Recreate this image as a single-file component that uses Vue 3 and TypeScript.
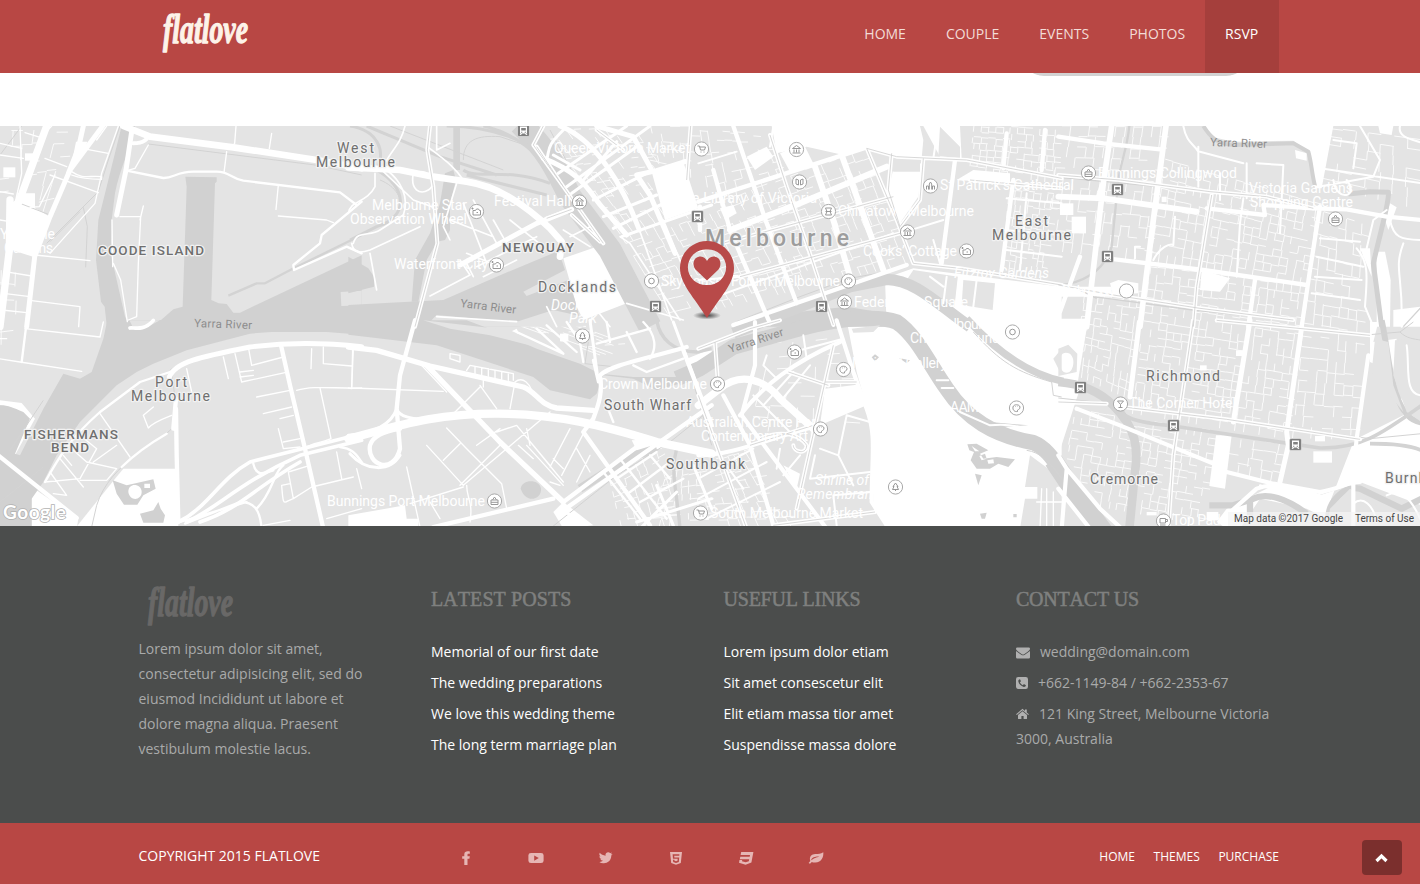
<script setup lang="ts">
type Point = [number, number]
interface Road { w: number; d: string }
interface Sector {
  x: number
  y: number
  parks: string[]
  water: string[]
  rivers: Road[]
  land: string[]
  rails: Road[]
  roads: Road[]
}
interface Label { t: string; x: number; y: number; w: number; k: string; r?: number }
interface Poi { x: number; y: number; g: string }

const nav = ['HOME', 'COUPLE', 'EVENTS', 'PHOTOS', 'RSVP']
const posts = ['Memorial of our first date', 'The wedding preparations', 'We love this wedding theme', 'The long term marriage plan']
const links = ['Lorem ipsum dolor etiam', 'Sit amet consescetur elit', 'Elit etiam massa tior amet', 'Suspendisse massa dolore']
const bottomLinks = ['HOME', 'THEMES', 'PURCHASE']

/* Each map sector covers 360x205 px and is drawn at three units per pixel. */
const sectors: Sector[] = [
  {
    x: 0, y: 120,
    parks: ['M35 250 70 220H105V265L150 290 104 412 20 385Z', 'M10 142H46V172H10Z', 'M75 100H100V122H75Z', 'M228 65H262L250 100 215 130Z'],
    water: [
      'M365 18H405C390 90 358 150 345 220L335 300 332 400 350 480 375 590 388 615H320L314 560 303 545 288 420 295 300 325 180Z',
      'M556 170 650 172V185L645 190 634 540 656 550 680 552 700 578H720L1085 406V620H460L520 568 548 560 560 200Z',
    ],
    land: ['M1022 516 1085 512V556L1024 558Z'],
    rivers: [],
    rails: [
      { w: 3, d: 'M360 18 325 120 295 215 140 370M250 262 262 320 257 442M150 365 240 275M445 72 945 135 1085 165M65 18 0 105M60 250 150 285' },
      { w: 7, d: 'M875 448 1085 345M685 527 770 490H795L875 448' },
    ],
    roads: [
      { w: 22, d: 'M140 18 55 250M30 240 28 390 0 620' },
      { w: 15, d: 'M308 18 210 150 150 290 104 410 80 620M250 18 235 85 205 160M395 35 378 150 350 285' },
      { w: 20, d: 'M370 18 450 50 700 82 950 120 1085 145' },
      { w: 7, d: 'M380 152 490 174C520 175 530 155 580 155H650C690 155 690 175 730 182L1020 217 1070 255M1085 245 965 345 960 370 880 435 882 450 1040 380 1085 400' },
      { w: 4, d: 'M680 95 672 158M708 18 704 70 690 85M380 152 405 145 445 75M815 40 808 85M835 195 828 268M835 288 980 300 1000 308M360 290 422 290 415 430 410 590 385 600M430 258 420 300M340 430 362 480 382 605M336 300 338 440M60 18 65 160 45 250M215 155C250 180 270 165 305 170V178C270 178 240 175 215 165M155 18 120 55M75 38 130 55M135 115 200 140M150 165 295 218M165 165 118 260 90 262M245 85 325 100M320 18 290 60M0 70 65 85M0 105 70 115M0 215 40 222M0 300 30 305M105 405 270 422M15 455 95 468M10 520 90 530M95 542 240 560 236 620M5 570 80 578M355 18 305 160 285 250 150 400' },
      { w: 12, d: 'M400 70C430 70 450 55 440 45' },
    ],
  },
  {
    x: 350, y: 120,
    parks: ['M905 155 1000 125 1045 265 945 300Z', 'M640 415 755 375 830 550 700 600 680 560 665 505Z'],
    water: [
      'M-5 555 120 548 280 540 440 470 620 395 632 412 645 450 520 515 530 528 655 480 675 540 690 600 500 620H-5Z',
      'M-5 410 55 445 72 470 72 500-5 520Z',
      'M285 160 310 150 318 180 300 250 300 330 285 360 262 365 230 420 205 545H185L195 420 240 340 270 250Z',
    ],
    land: ['M260 585 420 600 500 605 610 570 700 590 700 620H225Z'],
    rivers: [],
    rails: [
      { w: 20, d: 'M320 18V150' },
      { w: 70, d: 'M510 10C600 100 620 150 660 230L780 390 900 620' },
      { w: 9, d: 'M0 18C80 30 110 90 80 150M80 150C170 200 180 290 80 320L0 360M50 18C150 60 220 90 270 110L440 165M290 18C430 20 540 60 590 130M340 150C380 180 470 140 600 190M350 165 590 225M400 18C500 40 560 100 620 170' },
      { w: 3, d: 'M340 120C340 60 380 45 450 50L600 100M120 18 460 150M600 30 680 180M90 180C140 200 160 240 150 270' },
    ],
    roads: [
      { w: 20, d: 'M-5 142 150 150 250 170 350 185C450 200 530 260 600 325L635 365 630 410' },
      { w: 12, d: 'M240 18 232 90 250 200 262 370 195 620M590 295 665 268M665 285 750 365M580 18 550 75 640 200M820 90 740 30M1022 18 1010 180M560 80 640 200 760 370' },
      { w: 15, d: 'M1005 125 920 152 860 165 900 225 975 400M630 18C740 60 820 200 868 330M740 18 850 50 905 150M580 115C700 160 720 220 755 260L830 345M665 268 560 310 330 435' },
      { w: 9, d: 'M640 30C590 80 600 80 590 120M650 200 900 18M625 160 830 18M665 220 860 80M690 150 610 105M815 350 1085 255M700 180 800 65M730 240 900 155M760 290 920 225M790 325 940 250' },
      { w: 5, d: 'M232 80C300 130 320 150 340 180M190 160C180 210 210 225 235 210S245 160 215 155M165 18C150 80 120 90 95 150L190 240 250 262M75 160V200C50 250 0 240-5 280M10 370C20 330 60 350 90 330L160 285C180 230 150 180 110 150M5 370C10 400 30 400 60 390L210 320M320 190 280 320 300 360M340 250 410 430M370 240 440 370M300 300 430 350M430 300 470 370M380 440 560 350M350 400 450 440M240 528 360 465 330 420M500 420 400 470M480 300 580 380M640 330 720 380M370 470 350 430M660 350 720 320M260 18V90L300 70M810 350 840 370 990 600M870 335 965 600M940 300 1010 470M60 400 80 510' },
      { w: 5, d: 'M260 590 500 605M590 560 620 620M740 570 780 620M830 550 1000 600' },
    ],
  },
  {
    x: 700, y: 120,
    parks: [
      'M215 18H660L670 60 665 115 580 105 500 82 430 105 320 80 230 100Z', 'M582 138 668 130 655 230 600 310 565 210Z', 'M240 100 310 70 345 140 270 155Z', 'M140 110 200 80 220 110 165 150Z',
      'M555 475 640 445 1085 500V620H560Z', 'M60 265 100 255 110 280 75 300Z', 'M670 18 780 18 785 115 720 110Z', 'M820 150 930 160 930 190 770 180Z',
    ],
    water: ['M160 620 300 575 440 560 560 580 640 620Z'],
    land: ['M640 450 775 470 765 560 690 520 620 480Z', 'M790 480 885 490 878 570 785 555Z', 'M570 118 660 125V155H580Z', 'M720 20 780 80 780 115 715 108Z'],
    rivers: [],
    rails: [{ w: 34, d: 'M100 640 300 560 450 500 560 478C650 480 720 560 810 620' }, { w: 3, d: 'M110 605 300 530 450 475 560 455' }],
    roads: [
      { w: 18, d: 'M90 330 300 250 560 140M345 140 400 300 450 470M425 105 550 450' },
      { w: 13, d: 'M100 18 200 310 290 550M-5 245 500 82M100 615 620 435M0 260 0 330M40 150 90 330 210 610M940 180 905 450M765 120 725 430M920 40 910 145M780 470 770 560M1035 30 1025 150' },
      { w: 12, d: 'M210 45 260 200 330 400 400 615M120 470 600 340M-5 390 580 230M500 85 590 300 640 430 780 445 1085 495M500 85 590 110 800 120 1085 175M670 115 660 240 600 320M575 100 565 210 600 320M810 180 1085 205' },
      { w: 6, d: 'M-5 130 110 95M-5 480 120 470M20 540 580 340M220 18 210 80M590 18 575 110M715 18 700 115M600 340 730 300M700 360 720 430M920 235 1085 250M915 330 1085 345M920 390 1085 410M980 220 960 450M740 470 730 550M690 470 730 500M830 480 820 560' },
    ],
  },
  {
    x: 1060, y: 120,
    parks: [
      'M435 18H820L785 205H765L750 100 700 62 520 65 455 50Z', 'M425 450 510 475 480 515 420 510Z', 'M150 490 175 480 235 490V520L160 525Z', 'M0 500H155V530H0Z',
      'M950 395H975L992 480 990 620H950Z', 'M35 290H78V340H35Z', 'M0 250H40V285H0Z', 'M120 190H135V232H108Z', 'M705 90 740 100 740 122 708 115Z', 'M955 18H1000L995 45 960 40Z', 'M990 250 1010 262 985 330 975 300Z', 'M305 230H320V246H305Z', 'M900 385 930 385 935 470Z', 'M1000 570 1085 560V620H1000Z',
    ],
    water: [],
    land: [],
    rivers: [
      { w: 12, d: 'M430 18C450 50 470 72 520 75L700 70 745 95C755 130 755 160 765 198' },
      { w: 15, d: 'M865 222 930 215 985 217C990 240 960 340 940 430L965 620' },
    ],
    rails: [{ w: 7, d: 'M208 18C200 100 175 140 172 210L155 380C130 460 60 490-5 497' }, { w: 4, d: 'M-5 172 140 185 450 215 620 235M100 530 400 570 700 600M1085 560 1030 620M20 490 110 535' }],
    roads: [
      { w: 17, d: 'M155 18 130 190 80 620M318 18 280 300 240 620M-5 230 130 235 410 275' },
      { w: 13, d: 'M-5 50 130 70 300 88M140 415 430 450 740 495M780 260 750 450 725 620M585 480 565 620M440 265 615 285 610 255 760 265 860 268 980 290 1085 300M0 575 60 410' },
      { w: 12, d: 'M-5 165 180 180 450 215 620 230 760 265M455 225 410 500 400 620M-5 495 160 525 420 565 700 600' },
      { w: 6, d: 'M370 18C380 70 400 70 415 95M420 95 550 130M415 80V200M480 160V240M560 130V235M590 130 670 135 660 340M1020 18C1010 60 1080 60 1085 70M780 145 1085 190M775 200 940 170 960 120 900 18M820 60 890 70 880 145M780 355 900 365M770 410 910 440M765 470 905 480M755 520 900 540M890 385C930 430 920 480 915 560L940 620M240 380H225V415M280 420C300 380 330 370 340 375L345 290M550 235 540 310 530 470M860 180C900 230 830 250 820 180M990 300C1000 350 1020 360 1085 360M1030 370C1000 450 1030 460 1025 620M920 385 940 300 980 270' },
    ],
  },
  {
    x: 0, y: 322,
    parks: ['M370 440H535V620H225L345 470Z', 'M95 495 235 590 230 620H95Z', 'M0 235 65 243 105 290 45 400 30 390 75 300C50 250 20 255 0 250Z'],
    water: [
      'M322-6H1085V38L980 30H815L750 35 560 85 460 125 410 150 350 190 240 300 170 400 130 480 95 530V620H-5V250C20 248 35 255 70 270L90 290 45 395 60 400 130 260 190 155 240 170 275 150 310 50Z',
      'M338 475 380 490 460 472 467 500 430 520 412 548H372L350 515ZM385 510C385 480 425 485 425 510S390 540 385 510ZM433 485H450V498H433Z',
      'M420 575 460 565 475 540 482 560 495 580 490 602H430Z',
    ],
    land: ['M388-5H480C450 10 430 30 400 18Z'],
    rivers: [],
    rails: [{ w: 3, d: 'M510 145C540 120 600 100 750 70L960 60 1085 72M515 160C530 240 530 300 515 320C480 360 330 420 290 550L275 615M130 235 30 385M0 540 130 435' }],
    roads: [
      { w: 15, d: 'M508 165C525 120 600 105 750 75 850 62 960 60 1085 74' },
      { w: 13, d: 'M843 70 870 190 915 380 970 620M-5 400 230 588M528 260 530 400 535 600M520 320 528 230' },
      { w: 11, d: 'M390 18C400 15 430 30 460-5M535 600C620 560 660 470 750 420L1085 335M560 600C650 560 720 480 900 400L1085 355M600 600C720 560 760 500 900 420' },
      { w: 7, d: 'M80 0 65 120M510 150 420 180 300 270C210 350 180 400 135 480M365 435C400 400 440 370 500 335M720 540C760 540 780 560 785 620M540 600 740 540M1020 375C1060 380 1070 400 1085 420M760 425C770 470 800 450 820 445M770 560C820 510 820 450 850 430M555 605 720 540' },
      { w: 4, d: 'M-5 110 60 120 245 148M75 20 300 45 310 0M300 275 390 405M240 340 290 380 240 470 135 480M280 420 350 370M215 380 260 420 350 440M180 410 250 495M150 450 200 520 160 515M190 400 215 430M350 440 320 475H240M430 280 460 255M430 280 445 318C460 300 490 290 515 280M560 140 575 210M670 105 685 170M705 95 725 180 855 152M720 150 760 145M745 75 755 130 850 105M720 165 760 160M770 225 870 205M790 275 875 255M840 290 880 280M850 360 900 350M835 320 850 380 900 375M935 80 933 140M970 75V125L1055 132M1058 80 1055 195M890 205C940 190 1000 200 1085 198M960 198 993 350C960 365 940 360 915 378M865 450 930 430M865 450 880 530M845 490C850 560 850 540 880 530L935 495 1060 465M845 490 870 485M1010 390 1025 470M1070 440 1085 500M980 590 1085 560M790 610 870 595M0 50 20 50' },
    ],
  },
  {
    x: 350, y: 322,
    parks: ['M-5 580 165 550 170 590 205 590V620H-5Z', 'M630 35H655V58H630Z', 'M470 35 500 20 515 50 490 65Z', 'M1010 110 1085 80V125L1030 150Z', 'M640 540 730 610 640 620 610 570Z', 'M845 355 940 350 935 380 860 385Z'],
    water: [
      'M-5-5H250L350-5 470 40 560 80 690 125 750 155 850 165 980 165 1085 110V140L1040 170 920 205 850 170 760 160 740 215 720 232 600 205 550 165 260 70-5 38Z',
      'M512 500C515 470 570 470 573 500S530 550 512 500Z',
    ],
    land: ['M220-5 480 25 640 95 520 65 420 40 300 20Z'],
    rivers: [],
    rails: [{ w: 26, d: 'M690 500 840 405 920 380' }, { w: 10, d: 'M920-5C930 50 970 90 1040 90L1085 80M980 380C960 450 980 500 990 620' }, { w: 3, d: 'M600 620 800 460 960 360 1085 260M-5 72 70 85 160 108 240 130M800 135 1000 80 1085 370M715 60 705 125 800 135' }],
    roads: [
      { w: 16, d: 'M-5 75 80 85 240 132 520 195C560 210 570 250 620 258L730 265M230 130 450 360 640 540' },
      { w: 25, d: 'M-5 350C150 310 250 275 440 275C620 275 760 310 920 360L1085 395' },
      { w: 13, d: 'M195-5 150 160 140 260 150 380C130 460 50 430 60 370 70 340 100 330 150 320M750 160C760 220 740 260 730 290L700 330M750 160C780 130 870 115 1010 75M700 330 900 610M640 540 860 375M250 615 610 530M640 565 1085 250M1000 85 1085 310' },
      { w: 9, d: 'M-5 340C100 330 130 290 140 260 150 290 200 290 240 295M0 395C50 450 120 450 150 400M730 115 745 180M720-5 745 180M970 0 1085 310M980 510 870 620M920 490 970 610M700 620 640 560M1030 430 1085 560M860 600 1085 530' },
      { w: 4, d: 'M10 80 5 200-5 198M5 198 280 208M210 125 290 210M230 370 340 490 600 270M280 415 330 365M330 490 450 370M290 318 350 380 455 485 470 560M390 195 310 275M390 190 440 260M400 195V175M530 370 640 490M600 435 660 320M635 460 700 335M450 320 380 370M500 310 640 480M530 320 540 370M600 430 500 310 440 330M680 480 720 400M680 380 720 450M640 440 610 410M350 490C350 530 370 540 360 600M170 435 210 615M180 545 340 495M240 540 270 590M480 260 495 180C520 160 540 190 545 205M350 145 360 130 490 155V175M375 135V155M395 138V160M415 140V163M435 145V170M455 150V172M475 155V175M300 95 330 100V120L300 110ZM505 370 550 410M600 480 630 490' },
      { w: 7, d: 'M560 20 640 95M590 10 680 90M500 30 640 95M690 60 700 120M650 0 690 60M740 65 900 20M780 60 770 0M830 30 860 90M880 0C920 40 920 80 900 110M770 250 790 300M850 130 890 150 1000 110M800 470 920 390M840 510 960 420M870 540 1000 470M760 450 870 590M810 410 950 590M900 400 960 470' },
    ],
  },
  {
    x: 700, y: 322,
    parks: ['M440-5H1085V620H560L520 540 515 310 470 150Z', 'M375 200 470 188 500 250 360 310Z', 'M250 430 300 455 290 500Z'],
    water: [
      'M802 367 830 365 865 385 840 395 850 410 890 405 945 412 925 435 895 425 870 440H830L812 415 822 390 808 385ZM815 372 838 388 825 388ZM838 402 855 395 860 410 845 415ZM862 415 880 412 882 424 865 425Z',
      'M825 455 845 460 835 490Z', 'M515 106 525 97 537 106 525 118Z',
      'M840 575 860 572 855 590 845 590ZM940 576H950V586H940Z', 'M597 108 630 115 620 124ZM870 300 985 310 900 315Z',
    ],
    land: ['M455 20 540 10 520 30 460 32Z', 'M990 400 1085 470V620H960L975 530H1012V495H975Z', 'M1060 110 1085 80V160Z'],
    rivers: [{ w: 46, d: 'M-70 170 0 140 100 75 300 20C450-20 550-15 590 0 650 40 690 130 740 200 800 290 880 340 1000 362 1045 380 1070 430 1095 460' }],
    rails: [{ w: 22, d: 'M800-10C900 100 1000 160 1090 178' }, { w: 3, d: 'M820 30C900 120 950 150 1055 180L1060 220 1085 225M980 385C1020 390 1050 420 1085 470' }],
    roads: [
      { w: 22, d: 'M-5 250 60 200C120 150 190 170 240 230L340 320' },
      { w: 12.5, d: 'M410-5 460 150 500 260C530 340 515 400 515 540L560 610 760 620M165 0 165 130 125 280 380 620M70 220 150 370 220 610M-5 400C100 400 200 350 340 315M120 280C190 190 280 120 420 60' },
      { w: 12, d: 'M45 60 55 200M400 70 375 180 330 380 290 560M375 180 470 180M-5 220 60 400 140 620M150 370 340 310M180 350C250 320 300 340 320 370 320 400 280 390 280 370M-5 80 150 20 240-5M220 610 525 570M265 150 385 190' },
      { w: 6, d: 'M200 100 190 130 230 170M310 40 320 110M280 90 430 50M160 220 280 340M240 240 330 130M190 250 280 150M440 280 415 400 460 490M440 280 510 300M360 380 415 400M345 400 330 470 510 450M300 400 250 460M240 380 230 440M410 610 400 520 515 510M-5 470 160 380M-5 530 200 420M20 590 240 480M50 390 130 500M710 175 745 175M725 198 760 198M780 270 870 310C950 300 1020 330 1060 360' },
      { w: 4, d: 'M1040 500V620M1025 500 1020 620M1060 510V620M1010 540H1085' },
    ],
  },
  {
    x: 1060, y: 322,
    parks: [
      'M-5-10H85L50 200-5 160Z', 'M935 100 1030 280 890 350 880 450 1085 540V280L1000 210Z', 'M880 360 1085 340V550L900 480 780 520 640 490 500 560 470 600 500 620H540L600 530 740 560 800 590 810 540Z',
      'M468 340H515L495 500 448 492Z', 'M760 388H816V422H760Z', 'M528 85H550V102H528Z', 'M420 130H440V145H420Z', 'M765 342H795V358H765Z', 'M-5 190 60 200 40 260-5 400Z', 'M930 0H955L940 60 1010 50 1000 150 930 120Z', 'M440 570H475V595H440Z', 'M260 570H290V580H260Z',
    ],
    water: [],
    land: ['M-5 80 25 68 52 95 50 150-5 162ZM18 92C-10 92-5 152 20 152S50 92 18 92Z', 'M945 50 985 60 1000 190 1030 270 935 150ZM1005 55 1085 50V300L1040 270 1000 160Z', 'M810 560 870 500 900 520 1000 580 1085 560V620H800Z'],
    rivers: [
      { w: 56, d: 'M-20 415 50 520 140 640' },
      { w: 18, d: 'M965-5C980 60 990 180 1010 220 1030 280 1060 300 1090 302' },
      { w: 19, d: 'M448 550H520L580 530C620 510 680 530 740 575M805 590C805 540 850 490 900 500L1025 560 1085 530M570 540V580' },
    ],
    rails: [{ w: 26, d: 'M-5 180C60 185 120 210 160 250 230 320 235 380 225 450L208 620' }, { w: 11, d: 'M150 240C190 290 220 300 340 312L690 365 780 378C900 380 960 340 1085 250M930 365C1000 365 1050 370 1085 385' }, { w: 3, d: 'M-5 228 150 245 520 295 930 350 1085 335M540 0 930 38 1020 30 1060 0M1020 30C1040 50 1060 50 1085 55' }],
    roads: [
      { w: 15, d: 'M238 0 210 225M570-5 520 300M725 15 680 330 685 370 660 480' },
      { w: 12.5, d: 'M50 260 180 310 460 425M500 450 640 485 780 510C840 500 860 480 900 480M-5 400 20 440 5 620M20 440 120 560 185 620M-5 500 90 620M500 580 590 500C640 480 700 495 780 525M925 100 890 350 880 450V620' },
      { w: 12, d: 'M400-5 340 400 325 620M190 255 500 292 900 352M470-5 930 40M-5 240 140 245' },
      { w: 6, d: 'M880 440 1085 500M900 470 1085 520M600 490 740 530 880 480M1040 70C1050 130 1030 220 1085 220M980 520C1020 500 1050 520 1085 600M880 545C910 520 940 550 950 600' },
    ],
  },
]

/* The western sectors have no tram lines in their streets. */
const tramSectors = sectors.filter((s) => s.x > 0)

let seed = 41
const random = (): number => {
  seed = (seed * 16807) % 2147483647
  return seed / 2147483647
}

/* Street mesh inside a four-sided district, with some blocks left open. */
function mesh(c: Point[], cols: number, rows: number, density: number, jitter = 0.35): string {
  const at = (u: number, v: number): string => {
    const [a, b, e, f] = c
    const x = (a[0] * (1 - u) + b[0] * u) * (1 - v) + (f[0] * (1 - u) + e[0] * u) * v
    const y = (a[1] * (1 - u) + b[1] * u) * (1 - v) + (f[1] * (1 - u) + e[1] * u) * v
    return `${x.toFixed(1)} ${y.toFixed(1)}`
  }
  let d = ''
  for (let i = 0; i < cols; i++) {
    for (let j = 0; j < rows; j++) {
      if (random() < density) {
        const v = (j + (random() - 0.5) * jitter) / rows
        d += `M${at(i / cols, v)}L${at((i + 1) / cols, v)}`
      }
      if (random() < density) {
        const u = (i + (random() - 0.5) * jitter) / cols
        d += `M${at(u, j / rows)}L${at(u, (j + 1) / rows)}`
      }
    }
  }
  return d
}

const streets: string[] = [
  mesh([[1062, 126], [1170, 126], [1152, 262], [1045, 250]], 12, 12, 0.55, 0.2),
  mesh([[1165, 160], [1322, 205], [1308, 286], [1150, 262]], 20, 11, 0.6, 0.2),
  mesh([[1330, 128], [1420, 140], [1420, 210], [1322, 186]], 7, 7, 0.45, 0.2),
  mesh([[1150, 266], [1308, 286], [1290, 440], [1133, 414]], 20, 19, 0.58, 0.2),
  mesh([[1316, 210], [1370, 226], [1360, 440], [1292, 438]], 7, 20, 0.5, 0.2),
  mesh([[1085, 290], [1145, 292], [1130, 400], [1075, 375]], 9, 13, 0.58, 0.2),
  mesh([[1075, 410], [1218, 432], [1205, 526], [1060, 500]], 18, 13, 0.58, 0.2),
  mesh([[1228, 438], [1290, 445], [1282, 484], [1225, 470]], 5, 4, 0.5),
  mesh([[1010, 190], [1060, 195], [1045, 284], [1003, 275]], 8, 12, 0.6),
  mesh([[975, 126], [1062, 130], [1060, 184], [970, 172]], 12, 8, 0.6),
  mesh([[622, 237], [867, 148], [913, 263], [672, 320]], 32, 13, 0.5, 0.2),
  mesh([[700, 130], [768, 136], [790, 180], [712, 210]], 9, 7, 0.5),
  mesh([[545, 132], [640, 126], [700, 216], [620, 234]], 13, 12, 0.4),
  mesh([[640, 126], [700, 126], [700, 180], [652, 168]], 6, 6, 0.4),
  mesh([[666, 474], [750, 450], [800, 526], [650, 526]], 15, 9, 0.55),
  mesh([[610, 480], [662, 445], [690, 526], [620, 526]], 8, 8, 0.55),
  mesh([[520, 326], [585, 326], [650, 350], [600, 355]], 8, 4, 0.4),
  mesh([[770, 345], [850, 335], [862, 440], [750, 430]], 7, 7, 0.35),
  mesh([[0, 130], [80, 130], [50, 210], [0, 225]], 7, 6, 0.3),
  mesh([[0, 270], [30, 275], [26, 340], [0, 345]], 2, 5, 0.5),
]

const labels: Label[] = [
  { t: 'West', x: 337, y: 153, w: 37, k: 'area' }, { t: 'Melbourne', x: 316, y: 167, w: 79, k: 'area' },
  { t: 'COODE ISLAND', x: 98, y: 255, w: 106, k: 'zone' }, { t: 'NEWQUAY', x: 502, y: 252, w: 72, k: 'zone' },
  { t: 'Docklands', x: 538, y: 292, w: 78, k: 'area' }, { t: 'Port', x: 155, y: 387, w: 32, k: 'area' },
  { t: 'Melbourne', x: 131, y: 401, w: 79, k: 'area' }, { t: 'FISHERMANS', x: 24, y: 438.5, w: 94, k: 'zone' },
  { t: 'BEND', x: 51, y: 452, w: 38, k: 'zone' }, { t: 'South Wharf', x: 604, y: 410, w: 87, k: 'area' },
  { t: 'Southbank', x: 666, y: 469, w: 79, k: 'area' }, { t: 'Melbourne', x: 705, y: 246, w: 144, k: 'city' },
  { t: 'East', x: 1015, y: 226, w: 33, k: 'area' }, { t: 'Melbourne', x: 992, y: 240, w: 79, k: 'area' },
  { t: 'Richmond', x: 1146, y: 381, w: 74, k: 'area' }, { t: 'Cremorne', x: 1090, y: 484, w: 68, k: 'area' },
  { t: 'Burnl', x: 1385, y: 483, w: 37, k: 'area' },
  { t: 'Yarra River', x: 194, y: 327, w: 58, k: 'river', r: 2 }, { t: 'Yarra River', x: 460, y: 307, w: 56, k: 'river', r: 7 },
  { t: 'Yarra River', x: 730, y: 353, w: 57, k: 'river', r: -18 }, { t: 'Yarra River', x: 1210, y: 146, w: 57, k: 'river', r: 2 },
  { t: 'Queen Victoria Market', x: 554, y: 153, w: 136, k: 'poi' }, { t: 'Festival Hall', x: 494, y: 206, w: 77, k: 'poi' },
  { t: 'Melbourne Star', x: 372, y: 210, w: 95, k: 'poi' }, { t: 'Observation Wheel', x: 350, y: 224, w: 117, k: 'poi' },
  { t: 'Waterfront City', x: 394, y: 269, w: 94, k: 'poi' }, { t: 'State Library of Victoria', x: 666, y: 203, w: 151, k: 'poi' },
  { t: 'Chinatown Melbourne', x: 838, y: 216, w: 136, k: 'poi' }, { t: 'Cooks’ Cottage', x: 863, y: 256, w: 94, k: 'poi' },
  { t: 'SkyHouse', x: 661, y: 286, w: 62, k: 'poi' }, { t: 'Forum Melbourne', x: 731, y: 286, w: 109, k: 'poi' },
  { t: 'Federation Square', x: 854, y: 307, w: 114, k: 'poi' }, { t: 'Melbourne', x: 806, y: 138, w: 66, k: 'poi' },
  { t: 'St Patrick’s Cathedral', x: 940, y: 190, w: 134, k: 'poi' }, { t: 'Bunnings Collingwood', x: 1098, y: 178, w: 139, k: 'poi' },
  { t: 'Victoria Gardens', x: 1249, y: 193, w: 104, k: 'poi' }, { t: 'Shopping Centre', x: 1250, y: 207, w: 103, k: 'poi' },
  { t: 'Fitzroy Gardens', x: 954, y: 278, w: 95, k: 'poi slant' }, { t: 'Dockland', x: 551, y: 310, w: 57, k: 'poi slant' },
  { t: 'Park', x: 569, y: 323, w: 28, k: 'poi slant' }, { t: 'Crown Melbourne', x: 599, y: 389, w: 108, k: 'poi' },
  { t: 'Australian Centre For', x: 686, y: 427, w: 130, k: 'poi' }, { t: 'Contemporary Art', x: 701, y: 441, w: 107, k: 'poi' },
  { t: 'Shrine of', x: 815, y: 485, w: 54, k: 'poi slant' }, { t: 'Remembrance', x: 797, y: 499, w: 90, k: 'poi slant' },
  { t: 'South Melbourne Market', x: 710, y: 518, w: 153, k: 'poi' }, { t: 'Bunnings Port Melbourne', x: 327, y: 506, w: 158, k: 'poi' },
  { t: 'The Corner Hotel', x: 1129, y: 408, w: 107, k: 'poi' }, { t: 'Top Padd', x: 1172, y: 525, w: 56, k: 'poi' },
  { t: 'Yarraville', x: 0, y: 239, w: 55, k: 'poi' }, { t: 'Gardens', x: 4, y: 253, w: 49, k: 'poi' },
  { t: 'Richmond', x: 1062, y: 296, w: 52, k: 'poi' }, { t: 'Melbourne', x: 935, y: 329, w: 62, k: 'poi' },
  { t: 'Cricket Ground', x: 910, y: 343, w: 90, k: 'poi' }, { t: 'National Gallery', x: 852, y: 368, w: 95, k: 'poi' }, { t: 'AAMI Park', x: 950, y: 412, w: 60, k: 'poi' },
]

const stations: Point[] = [[523.5, 130.5], [697.5, 216.5], [655.5, 306.5], [821.5, 306.5], [1117.5, 189.5], [1107.5, 256.5], [1080.5, 387.5], [1173.5, 425.5], [1295.5, 444.5]]

const glyphs: Record<string, string> = {
  cart: 'M-4-3H-2L-1 1H3L4-2H-2M-1 3H0M2 3H3',
  museum: 'M-4-1 0-4 4-1ZM-4 3.5H4M-2.5 0V3M0 0V3M2.5 0V3',
  book: 'M-3.5-3 -1-2V3L-3.5 2ZM3.5-3 1-2V3L3.5 2Z',
  photo: 'M-3.5-1H-1L0-2.5H2L3-1H4V3.5H-3.5ZM-4-4V-2M-5-3H-3M0 1H1.5',
  tree: 'M0-4 2.5-.5H1.5L3 2.5H-3L-1.5-.5H-2.5ZM0 2.5V4',
  ring: 'M-2.8 0A2.8 2.8 0 1 0 2.8 0 2.8 2.8 0 1 0-2.8 0Z',
  bag: 'M-3.5-1H3.5V3.5H-3.5ZM-2-1 0-4 2-1M-3.5 1.3H3.5',
  glass: 'M-3-3H3L0 .5ZM0 .5V3.5M-2 3.5H2',
  cup: 'M-3.5-2.5H2V2H-3.5ZM2-1.5H4V.5H2M-3.5 4H2',
  church: 'M-4 3.5V0H-2V3.5M4 3.5V0H2V3.5M-1.2 3.5V-2L0-4 1.2-2V3.5',
  gate: 'M-3-3.5H3L1.5 0 3 3.5H-3L-1.5 0ZM-3 0H3',
  art: 'M-3.5-1C-3-4 3-4 3.5-1S0 1 1 3.5C-2 4-4 2-3.5-1ZM-1.5-1.5H-1M1-1.8H1.5',
  blank: '',
}
const pois: Poi[] = [
  { x: 701.5, y: 149, g: 'cart' }, { x: 796.5, y: 149.5, g: 'museum' }, { x: 799.5, y: 182, g: 'book' }, { x: 828.5, y: 211.5, g: 'gate' },
  { x: 907.5, y: 232, g: 'museum' }, { x: 848.5, y: 281, g: 'art' }, { x: 844.5, y: 302, g: 'museum' }, { x: 930.5, y: 186, g: 'church' },
  { x: 966.5, y: 251, g: 'photo' }, { x: 579.5, y: 202, g: 'museum' }, { x: 476.5, y: 211.5, g: 'photo' }, { x: 496.5, y: 265, g: 'photo' },
  { x: 651.5, y: 281, g: 'ring' }, { x: 582.5, y: 336, g: 'tree' }, { x: 717.5, y: 384, g: 'art' }, { x: 794.5, y: 352, g: 'photo' },
  { x: 843.5, y: 369.5, g: 'art' }, { x: 820.5, y: 429, g: 'art' }, { x: 895.5, y: 487, g: 'tree' }, { x: 1016.5, y: 408, g: 'art' },
  { x: 1012.5, y: 332, g: 'ring' }, { x: 1126.5, y: 291, g: 'blank' }, { x: 1088.5, y: 173, g: 'bag' }, { x: 1335.5, y: 219, g: 'bag' },
  { x: 494.5, y: 501, g: 'bag' }, { x: 700.5, y: 513, g: 'cart' }, { x: 1120.5, y: 404, g: 'glass' }, { x: 1163.5, y: 521, g: 'cup' },
]

const social: { name: string; d: string }[] = [
  { name: 'Facebook', d: 'M6.3 15V8.8H4.2V6.2H6.3V4.2C6.3 2 7.8 1.2 9.8 1.2 10.8 1.2 11.8 1.4 11.8 1.4V3.8H10.5C9.6 3.8 9.5 4.3 9.5 5V6.2H11.8L11.4 8.8H9.5V15Z' },
  { name: 'YouTube', d: 'M3 3H13Q15.6 3 15.6 5.2V10.8Q15.6 13 13 13H3Q.4 13 .4 10.8V5.2Q.4 3 3 3ZM6.2 5.4V10.8L10.8 8.1Z' },
  { name: 'Twitter', d: 'M14.6 4.3 13.3 5.6C13.3 11 9 13.6 5.2 13.2 3.7 13.1 2.4 12.7 1.3 11.9 2.8 12 4 11.6 5 10.8 3.8 10.7 2.8 10 2.5 9H3.6C2.3 8.6 1.4 7.5 1.4 6.2L2.5 6.5C1.3 5.5 1 4 1.8 2.8 3.2 4.5 5.2 5.5 7.6 5.7 7 3.6 8.6 2.3 10.2 2.3 11.1 2.3 11.8 2.7 12.2 3.2L13.9 2.6 12.9 4.2Z' },
  { name: 'HTML5', d: 'M2 2H14L12.8 13 8 14.8 3.2 13ZM4.6 4.2 5 8.8H9.7L9.5 10.8 8 11.3 6.5 10.8 6.4 9.8H5L5.2 11.9 8 12.9 10.8 11.9 11.2 7.4H6.4L6.2 5.7H11.3L11.4 4.2Z' },
  { name: 'CSS3', d: 'M3.2 2H15.4L13.4 12.6 7.6 14.8 1 12.8 1.5 9.9H4.2L4 11.2 7.7 12.3 10.8 11.3 11.2 9.2H1.8L2.3 6.7H11.7L12 5.1H2.6Z' },
  { name: 'Leaf', d: 'M15.3 2.2C15.8 7 13.6 12.3 7.3 12.5 5.8 12.6 4.8 12.2 3.8 11.9L2 13.8.6 13 2.3 10.9C.8 6.5 4 4.2 7.2 4.1 10.4 4 12.7 4.1 15.3 2.2ZM3.7 10.2C6.4 7.8 8 8 11.4 6.6 8 6.7 5.2 6.7 3.2 9.5Z' },
]
</script>

<template>
  <div class="page">
    <header class="header">
      <div class="wrap header-row">
        <svg class="logo" width="98" height="48" viewBox="0 0 98 48" aria-label="flatlove">
          <text x="9" y="33.5" textLength="85" lengthAdjust="spacingAndGlyphs">flatlove</text>
        </svg>
        <nav class="nav">
          <a v-for="item in nav" :key="item" :class="{ active: item === 'RSVP' }">{{ item }}</a>
        </nav>
      </div>
    </header>

    <div class="gap"><div class="button-edge"></div></div>

    <svg class="map" width="1420" height="400" viewBox="0 126 1420 400">
      <g class="streets"><path v-for="(d, i) in streets" :key="i" :d="d" /></g>
      <g v-for="(s, i) in sectors" :key="'a' + i" :transform="`translate(${s.x} ${s.y}) scale(.33333)`">
        <path v-for="(d, j) in s.parks" :key="j" class="park" :d="d" />
      </g>
      <g v-for="(s, i) in sectors" :key="'b' + i" :transform="`translate(${s.x} ${s.y}) scale(.33333)`">
        <path v-for="(d, j) in s.water" :key="j" class="water" :d="d" />
        <path v-for="(r, j) in s.rivers" :key="'r' + j" class="river-line" :stroke-width="r.w" :d="r.d" />
        <path v-for="(d, j) in s.land" :key="'l' + j" class="land" :d="d" />
      </g>
      <g v-for="(s, i) in sectors" :key="'c' + i" :transform="`translate(${s.x} ${s.y}) scale(.33333)`">
        <path v-for="(r, j) in s.rails" :key="j" class="rail" :stroke-width="r.w" :d="r.d" />
      </g>
      <g v-for="(s, i) in sectors" :key="'d' + i" :transform="`translate(${s.x} ${s.y}) scale(.33333)`">
        <path v-for="(r, j) in s.roads" :key="j" class="road" :stroke-width="r.w" :d="r.d" />
      </g>
      <g v-for="(s, i) in tramSectors" :key="'e' + i" :transform="`translate(${s.x} ${s.y}) scale(.33333)`">
        <path v-for="(r, j) in s.roads.filter((q) => q.w === 12)" :key="j" class="tram" :d="r.d" />
      </g>

      <text
        v-for="(l, i) in labels" :key="'x' + i" :class="l.k" :x="l.x" :y="l.y" :textLength="l.w"
        :transform="l.r ? `rotate(${l.r} ${l.x} ${l.y})` : undefined"
      >{{ l.t }}</text>

      <g v-for="(p, i) in stations" :key="'s' + i" :transform="`translate(${p[0]} ${p[1]})`">
        <rect class="station" x="-6" y="-6" width="12" height="12" rx="1.5" />
        <path class="train" d="M-3.5-4H3.5V3H2.5L4 4.5H2.5L1.5 3H-1.5L-2.5 4.5H-4L-2.5 3H-3.5ZM-2.3-2.5V0H2.3V-2.5ZM-2.4 1.2V2.2H-1.2V1.2ZM1.2 1.2V2.2H2.4V1.2Z" />
      </g>
      <g v-for="(p, i) in pois" :key="'p' + i" :transform="`translate(${p.x} ${p.y})`">
        <circle class="poi-dot" r="7.1" />
        <path class="poi-glyph" :d="glyphs[p.g]" />
      </g>

      <defs>
        <radialGradient id="pin-shade">
          <stop offset="0" stop-color="#222" stop-opacity=".85" />
          <stop offset="1" stop-color="#222" stop-opacity="0" />
        </radialGradient>
      </defs>
      <ellipse cx="707" cy="315.5" rx="14" ry="4" fill="url(#pin-shade)" />
      <path class="pin" d="M707 241C692 241 680 253 680 268 680 284 694 297 707 318 720 297 734 284 734 268 734 253 722 241 707 241ZM707 249.5A17.8 17.8 0 1 1 707 285 17.8 17.8 0 1 1 707 249.5Z" />
      <path class="pin" d="M707 280.500 695.500 269.500C692 265 693 257.500 699.500 256.500 703.500 256 706 258.500 707 261 708 258.500 710.500 256 714.500 256.500 721 257.500 722 265 718.500 269.500Z" />

      <text class="google" x="3" y="518.5" textLength="63">Google</text>
      <rect class="credit-bg" x="1228" y="512" width="192" height="14" />
      <text class="credit" x="1234" y="522" textLength="109">Map data ©2017 Google</text>
      <text class="credit" x="1355" y="522" textLength="59">Terms of Use</text>
    </svg>

    <footer class="footer">
      <div class="wrap columns">
        <section class="about">
          <svg class="logo dim" width="98" height="48" viewBox="0 0 98 48" aria-label="flatlove">
            <text x="9" y="33.5" textLength="85" lengthAdjust="spacingAndGlyphs">flatlove</text>
          </svg>
          <p>Lorem ipsum dolor sit amet,<br>consectetur adipisicing elit, sed do<br>eiusmod Incididunt ut labore et<br>dolore magna aliqua. Praesent<br>vestibulum molestie lacus.</p>
        </section>
        <section>
          <h4>LATEST POSTS</h4>
          <ul><li v-for="p in posts" :key="p"><a>{{ p }}</a></li></ul>
        </section>
        <section>
          <h4 class="tight">USEFUL LINKS</h4>
          <ul><li v-for="l in links" :key="l"><a>{{ l }}</a></li></ul>
        </section>
        <section>
          <h4 class="tight">CONTACT US</h4>
          <ul class="contact">
            <li>
              <svg class="mail" width="14" height="12" viewBox="0 0 14 12"><path d="M1.3.5H12.7Q14 .5 14 1.8C14 3 13 3.7 12 4.4L8.5 6.9C7.5 7.6 6.5 7.6 5.5 6.9L2 4.4C1 3.7 0 3 0 1.8Q0 .5 1.3.5ZM0 4 5.2 7.7C6.4 8.5 7.6 8.5 8.8 7.7L14 4V10.2Q14 11.5 12.7 11.5H1.3Q0 11.5 0 10.2Z" /></svg>wedding@domain.com
            </li>
            <li>
              <svg class="phone" width="12" height="12" viewBox="0 0 12 12"><path fill-rule="evenodd" d="M2.2 0H9.8Q12 0 12 2.2V9.8Q12 12 9.800 12H2.2Q0 12 0 9.8V2.2Q0 0 2.2 0ZM4 2.2C2.8 2.3 2.2 3.3 2.3 4.3 2.7 7 5 9.3 7.8 9.9 9 10 9.8 9.3 9.9 8.2L7.9 7.1 6.9 8.2C5.6 7.6 4.5 6.5 3.9 5.2L5 4.2Z" /></svg>+662-1149-84 / +662-2353-67
            </li>
            <li>
              <svg class="home" width="13" height="12" viewBox="0 0 13 12"><path d="M6.5 3.3 11 7V10.4Q11 11 10.4 11H7.6V8H5.4V11H2.6Q2 11 2 10.4V7ZM6.5.8 9 2.9V1.4H10.8V4.4L12.9 6.2 12.2 7 6.5 2.3.8 7 .1 6.2Z" /></svg>121 King Street, Melbourne Victoria<br>3000, Australia
            </li>
          </ul>
        </section>
      </div>
    </footer>

    <div class="bottom">
      <div class="wrap bottom-row">
        <span class="copy">COPYRIGHT 2015 FLATLOVE</span>
        <div class="social">
          <svg v-for="s in social" :key="s.name" width="16" height="16" viewBox="0 0 16 16" :aria-label="s.name"><path fill-rule="evenodd" :d="s.d" /></svg>
        </div>
        <div class="bottom-links"><a v-for="b in bottomLinks" :key="b">{{ b }}</a></div>
      </div>
      <button class="to-top" aria-label="Back to top">
        <svg width="14" height="10" viewBox="0 0 14 10"><path d="M1.500 8 6.500 3 11.500 8" /></svg>
      </button>
    </div>
  </div>
</template>

<style>
html, body { margin: 0; overflow: hidden; }
</style>

<style scoped>
.page { width: 1420px; height: 884px; background: #fff; font: 14px/25px "Open Sans", sans-serif; color: #a9aaaa; }
.wrap { width: 1140.5px; margin-left: 138.5px; }
.header { height: 73px; background: #b84744; }
.header-row { display: flex; justify-content: space-between; }
.logo { display: block; margin: 9px 0 0 15px; overflow: visible; }
.logo text { font: italic 700 43px "Liberation Serif", serif; fill: #fdf3e9; stroke: #fdf3e9; stroke-width: 1.3; stroke-linejoin: round; }
.nav { display: flex; height: 73px; }
.nav a { padding: 0 20px; line-height: 68px; font-size: 14px; color: #f3dcd7; }
.nav .active { background: #a53f3c; color: #fff; padding-right: 20.8px; }
.gap { height: 53px; overflow: hidden; }
.button-edge { width: 226px; height: 45px; margin: -42px 0 0 1022px; border-radius: 22px; background: #d2d2d2; }
.map { display: block; background: #e4e4e4; }
.map path { stroke-linejoin: round; }
.park { fill: #fff; }
.water { fill: #d1d1d1; fill-rule: evenodd; }
.land { fill: #e4e4e4; fill-rule: evenodd; }
.river-line { fill: none; stroke: #d1d1d1; }
.rail { fill: none; stroke: #d3d3d3; }
.road { fill: none; stroke: #fff; stroke-linecap: round; }
.tram { fill: none; stroke: #d0d0d0; stroke-width: 2.5; }
.streets path { fill: none; stroke: #fbfbfb; stroke-width: 1; }
.area, .zone, .city { paint-order: stroke; stroke: #f2f2f2; stroke-width: 2.5px; stroke-linejoin: round; }
.area { font: 14px Roboto, sans-serif; fill: #6f6f6f; }
.zone { font: 500 13.5px Roboto, sans-serif; fill: #6f6f6f; }
.city { font: 500 23px Roboto, sans-serif; fill: #9d9d9d; }
.river { font: 11.5px Roboto, sans-serif; fill: #8d8d8d; }
.poi { font: 14px Roboto, sans-serif; fill: #fff; }
.slant { font-style: italic; }
.station { fill: #808080; stroke: #f5f5f5; stroke-width: .5; }
.train { fill: #fff; fill-rule: evenodd; }
.poi-dot { fill: #fff; stroke: #aaa; stroke-width: 1; }
.poi-glyph { fill: none; stroke: #999; stroke-width: 1; }
.pin { fill: #b84a49; fill-rule: evenodd; }
.google { font: 700 19px Lato, sans-serif; fill: #fff; stroke: #b2b2b2; stroke-width: 1.6px; paint-order: stroke; }
.credit-bg { fill: #f5f5f5; fill-opacity: .7; }
.credit { font: 10px Roboto, sans-serif; fill: #444; }
.footer { height: 297px; background: #4b4d4c; }
.columns { display: grid; grid-template-columns: repeat(4, 292.5px); }
.about .logo { margin: 56px 0 0; }
.dim text { fill: #696867; stroke: #696867; }
p { margin: 6px 0 0; }
h4 { margin: 61px 0 0; height: 25px; font: 20px/25px "Liberation Serif", serif; font-kerning: none; letter-spacing: .08px; color: #7f807f; -webkit-text-stroke: .5px #7f807f; }
h4.tight { letter-spacing: -.22px; }
ul { list-style: none; margin: 27px 0 0; padding: 0; }
li { margin-bottom: 6px; white-space: nowrap; }
ul a { color: #fff; }
.contact svg { fill: #b0b0b0; margin-right: 10px; }
.mail { vertical-align: -2px; }
.phone, .home { vertical-align: -1px; }
.bottom { height: 61px; background: #b84744; position: relative; color: #fff; }
.bottom-row { display: flex; height: 66px; align-items: center; }
.copy { width: 319.5px; padding-bottom: 2px; }
.social { display: flex; gap: 54px; padding-top: 4px; }
.social svg { fill: #e6b6b4; display: block; }
.bottom-links { margin-left: auto; display: flex; gap: 18.6px; font-size: 12px; }
.to-top { position: absolute; left: 1362px; top: 17px; width: 40px; height: 35px; border: 0; border-radius: 4px; padding: 0; background: #7b2f2d; display: flex; align-items: center; justify-content: center; }
.to-top path { fill: none; stroke: #fff; stroke-width: 3.2; }
</style>
